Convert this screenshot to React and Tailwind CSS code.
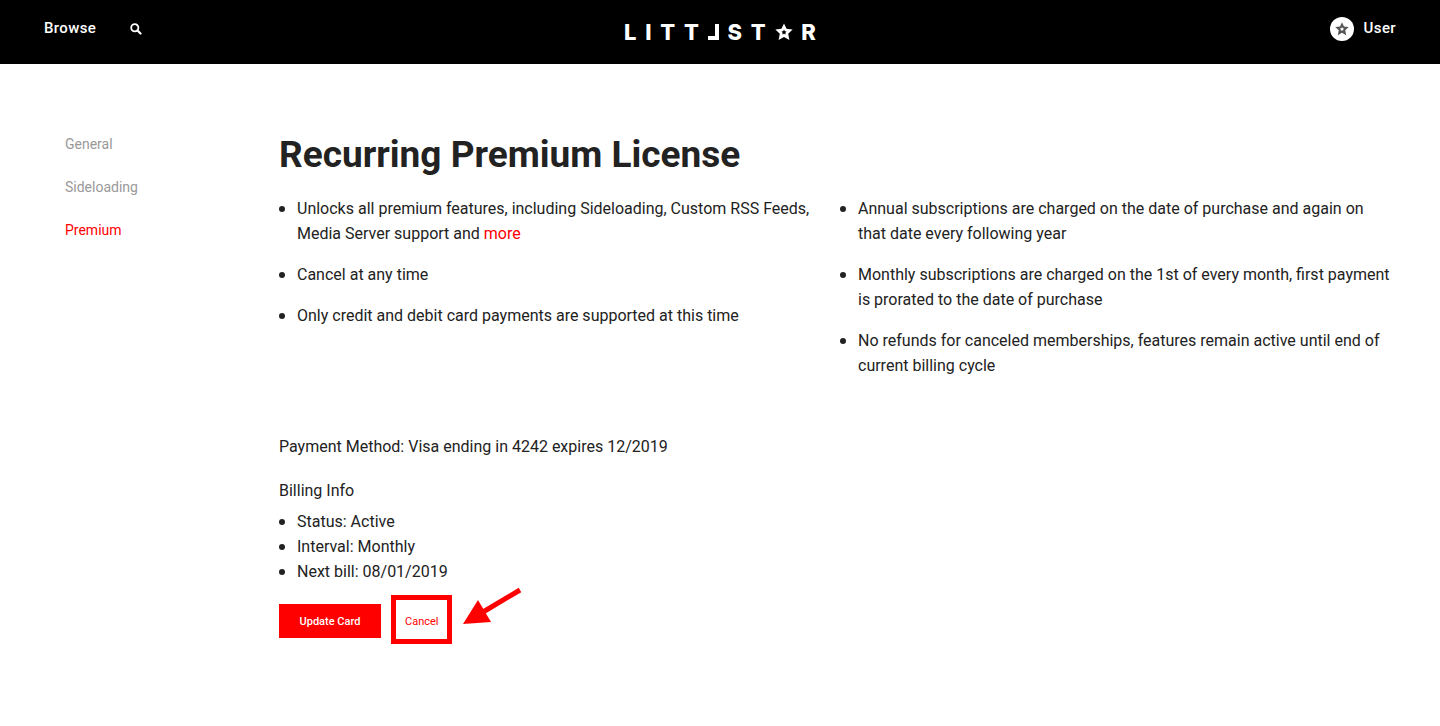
import React from "react";

const navItems = [
  { label: "General", active: false },
  { label: "Sideloading", active: false },
  { label: "Premium", active: true },
];

function Star({ className }) {
  return (
    <svg viewBox="0 0 24 24" className={className} aria-hidden="true">
      <path
        fill="currentColor"
        fillRule="evenodd"
        d="M12 .5L15.4 7.6 23.5 8.6 17.6 14.2 19.2 22.5 12 18.6 4.8 22.5 6.4 14.2.5 8.6 8.6 7.6zM12 8.7L10.8 10.9 8.6 11.3 10.1 13.1 9.9 15.2 12 14.3 14.1 15.2 13.9 13.1 15.4 11.3 13.2 10.9z"
      />
    </svg>
  );
}

function Logo() {
  return (
    <a
      href="#home"
      aria-label="Littlstar"
      className="flex w-48 items-center justify-between font-['Inter',sans-serif] text-[22px] leading-6 font-extrabold"
    >
      <span>L</span>
      <span>I</span>
      <span>T</span>
      <span>T</span>
      <span className="h-4 w-[11px] border-r-4 border-b-4 border-white" />
      <span>S</span>
      <span>T</span>
      <Star className="h-[18px] w-[18px]" />
      <span>R</span>
    </a>
  );
}

function Header() {
  return (
    <header className="grid h-16 grid-cols-3 items-center bg-black px-11 text-white">
      <nav className="flex items-center gap-[34px] pb-[7px] text-[15px] font-medium tracking-wide">
        <a href="#browse">Browse</a>
        <button type="button" aria-label="Search">
          <svg viewBox="0 0 12 12" className="h-3 w-3" fill="none" stroke="currentColor">
            <circle cx="4.8" cy="4.8" r="3.6" strokeWidth="1.8" />
            <path d="M7.5 7.5l3 3" strokeWidth="2.2" strokeLinecap="round" />
          </svg>
        </button>
      </nav>
      <div className="flex justify-center">
        <Logo />
      </div>
      <a
        href="#user"
        className="flex items-center justify-end gap-[10px] pb-[7px] text-[15px] font-medium tracking-wide"
      >
        <span className="flex h-6 w-6 items-center justify-center rounded-full bg-white text-[#555]">
          <Star className="h-[14px] w-[14px]" />
        </span>
        User
      </a>
    </header>
  );
}

function Sidebar() {
  return (
    <nav className="w-[214px] shrink-0 pt-1">
      <ul className="flex flex-col gap-[23px] text-sm">
        {navItems.map((item) => (
          <li key={item.label}>
            <a
              href={"#" + item.label.toLowerCase()}
              className={item.active ? "text-[#ff0000]" : "text-[#999]"}
            >
              {item.label}
            </a>
          </li>
        ))}
      </ul>
    </nav>
  );
}

function Bullet({ children }) {
  return (
    <li className="flex gap-3">
      <span className="mt-[10px] h-[6px] w-[6px] shrink-0 rounded-full bg-[#222]" />
      <span>{children}</span>
    </li>
  );
}

function App() {
  return (
    <div className="min-h-screen bg-white font-['Roboto',sans-serif] text-[#222]">
      <Header />
      <div className="flex pt-[66px] pr-[47px] pl-[65px]">
        <Sidebar />
        <main className="min-w-0 flex-1 leading-[25px]">
          <h1 className="text-[37px] leading-[50px] font-bold">Recurring Premium License</h1>

          <div className="mt-4 grid grid-cols-2 gap-2">
            <ul className="flex flex-col gap-4">
              <Bullet>
                Unlocks all premium features, including Sideloading, Custom RSS Feeds, Media Server
                support and{" "}
                <a href="#more" className="text-[#ff0000]">
                  more
                </a>
              </Bullet>
              <Bullet>Cancel at any time</Bullet>
              <Bullet>Only credit and debit card payments are supported at this time</Bullet>
            </ul>
            <ul className="flex flex-col gap-4">
              <Bullet>
                Annual subscriptions are charged on the date of purchase and again on that date
                every following year
              </Bullet>
              <Bullet>
                Monthly subscriptions are charged on the 1st of every month, first payment is
                prorated to the date of purchase
              </Bullet>
              <Bullet>
                No refunds for canceled memberships, features remain active until end of current
                billing cycle
              </Bullet>
            </ul>
          </div>

          <p className="mt-14">Payment Method: Visa ending in 4242 expires 12/2019</p>

          <h2 className="mt-[19px]">Billing Info</h2>
          <ul className="mt-[6px]">
            <Bullet>Status: Active</Bullet>
            <Bullet>Interval: Monthly</Bullet>
            <Bullet>Next bill: 08/01/2019</Bullet>
          </ul>

          <div className="mt-5 flex items-center gap-6 text-[11px]">
            <button
              type="button"
              className="h-[34px] w-[102px] bg-[#ff0000] font-medium text-white"
            >
              Update Card
            </button>
            <div className="relative">
              <button type="button" className="text-[#ff0000]">
                Cancel
              </button>
              {/* callout around the cancel button */}
              <span className="pointer-events-none absolute -inset-x-[14px] -top-[14px] -bottom-[10px] border-[5px] border-[#ff0000]" />
              <svg
                viewBox="0 0 60 38"
                className="pointer-events-none absolute bottom-[9px] left-[58px] h-[38px] w-[60px]"
                aria-hidden="true"
              >
                <path d="M57 3L20 25" stroke="#ff0000" strokeWidth="5" />
                <path d="M0 37L15 13L28 35z" fill="#ff0000" />
              </svg>
            </div>
          </div>
        </main>
      </div>
    </div>
  );
}

export default App;
